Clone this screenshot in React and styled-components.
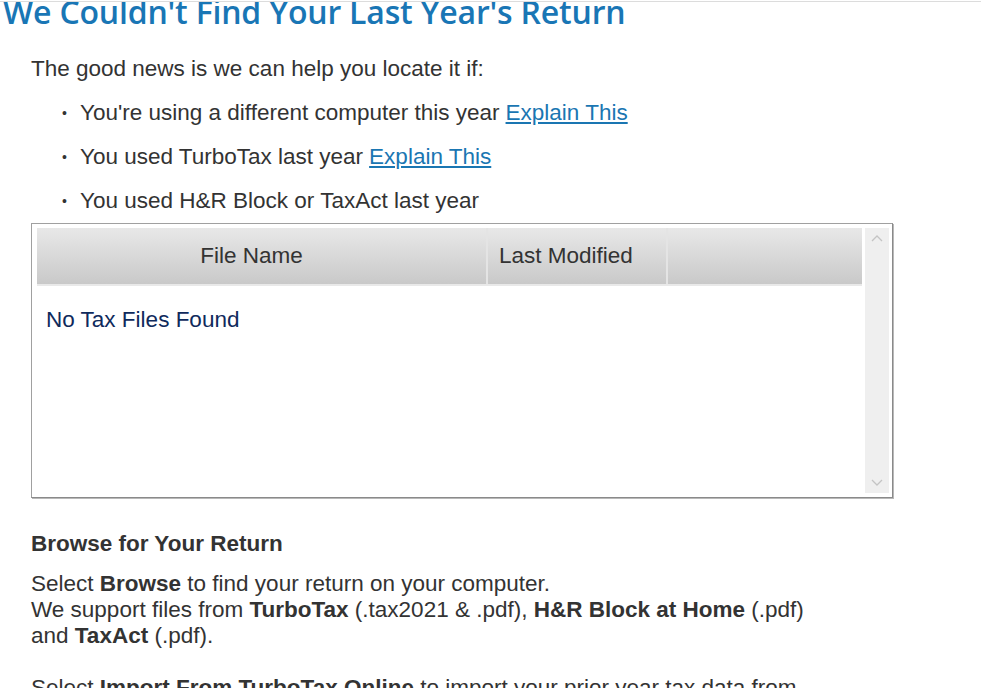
import styled, { createGlobalStyle } from "styled-components";

const GlobalStyle = createGlobalStyle`
    body {
        margin: 0;
        background: #fff;
        font-family: "Liberation Sans", Arial, sans-serif;
        color: #333;
    }
`;

const Page = styled.div`
    width: 981px;
    height: 688px;
    overflow: hidden;
    border-top: 1px solid #dcdcdc;
    margin-top: 1px;
    box-sizing: border-box;
`;

const Title = styled.h1`
    margin: -6px 0 0 3px;
    font-family: "Open Sans", "Noto Sans", sans-serif;
    font-weight: 600;
    font-size: 32px;
    line-height: 32px;
    color: #1976b5;
    letter-spacing: -0.2px;
`;

const Body = styled.div`
    padding: 0 0 0 31px;
    font-size: 22.5px;
`;

const Intro = styled.p`
    margin: 26px 0 0;
    line-height: 30px;
`;

const ReasonList = styled.ul`
    margin: 14px 0 0;
    padding: 0 0 0 31px;
    list-style: none;
    display: flex;
    flex-direction: column;
    gap: 14px;
`;

const Reason = styled.li`
    line-height: 30px;
    display: flex;
    gap: 12px;

    &::before {
        content: "•";
        font-size: 14px;
        width: 6px;
    }
`;

const Explain = styled.a`
    color: #1a76b2;
    text-decoration: underline;
    margin-left: 6px;
    cursor: pointer;
`;

const FileBox = styled.div`
    margin-top: 7px;
    width: 862px;
    height: 275px;
    box-sizing: border-box;
    border: 1px solid #a0a0a0;
    border-right-color: #8a8a8a;
    border-bottom-color: #8a8a8a;
    box-shadow: 1px 1px 0 #b8b8b8;
    padding: 4px 3px 4px 5px;
    display: flex;
    gap: 3px;
`;

const FileList = styled.div`
    flex: 1;
    display: flex;
    flex-direction: column;
`;

const HeaderRow = styled.div`
    display: grid;
    grid-template-columns: 449px 180px 1fr;
    height: 56px;
    background: linear-gradient(#e8e8e8, #c9c9c9);
    border-bottom: 2px solid #e9e9e9;
`;

const HeaderCell = styled.div`
    display: flex;
    align-items: center;
    justify-content: ${p => (p.$left ? "flex-start" : "center")};
    padding: ${p => (p.$left ? "0 0 0 11px" : "0 20px 0 0")};
    border-left: ${p => (p.$first ? "none" : "2px solid #e4e4e4")};
    font-size: 22.5px;
    color: #333;
`;

const EmptyNote = styled.div`
    padding: 20px 0 0 9px;
    color: #0f2a5c;
    font-size: 22.5px;
    line-height: 28px;
`;

const ScrollTrack = styled.div`
    width: 24px;
    background: #efefef;
    display: flex;
    flex-direction: column;
    justify-content: space-between;
    align-items: center;
    padding: 6px 0;
`;

const Chevron = styled.svg`
    width: 12px;
    height: 8px;
    stroke: #c4c4c4;
    fill: none;
    stroke-width: 1.3;
`;

const SectionTitle = styled.h2`
    margin: 33px 0 0;
    font-size: 22.5px;
    line-height: 26px;
    font-weight: bold;
`;

const Para = styled.p`
    margin: ${p => (p.$gap ? "26px" : "14px")} 0 0;
    line-height: 26px;
    font-size: 22.5px;
`;

function App() {
    return (
        <Page>
            <GlobalStyle />
            <Title>We Couldn't Find Your Last Year's Return</Title>
            <Body>
                <Intro>The good news is we can help you locate it if:</Intro>
                <ReasonList>
                    <Reason>
                        <span>You're using a different computer this year<Explain>Explain This</Explain></span>
                    </Reason>
                    <Reason>
                        <span>You used TurboTax last year<Explain>Explain This</Explain></span>
                    </Reason>
                    <Reason>
                        <span>You used H&amp;R Block or TaxAct last year</span>
                    </Reason>
                </ReasonList>
                <FileBox>
                    <FileList>
                        <HeaderRow>
                            <HeaderCell $first>File Name</HeaderCell>
                            <HeaderCell $left>Last Modified</HeaderCell>
                            <HeaderCell></HeaderCell>
                        </HeaderRow>
                        <EmptyNote>No Tax Files Found</EmptyNote>
                    </FileList>
                    <ScrollTrack>
                        <Chevron viewBox="0 0 12 8"><path d="M1 7 L6 2 L11 7" /></Chevron>
                        <Chevron viewBox="0 0 12 8"><path d="M1 1 L6 6 L11 1" /></Chevron>
                    </ScrollTrack>
                </FileBox>
                <SectionTitle>Browse for Your Return</SectionTitle>
                <Para>
                    Select <b>Browse</b> to find your return on your computer.<br />
                    We support files from <b>TurboTax</b> (.tax2021 &amp; .pdf), <b>H&amp;R Block at Home</b> (.pdf)<br />
                    and <b>TaxAct</b> (.pdf).
                </Para>
                <Para $gap>
                    Select <b>Import From TurboTax Online</b> to import your prior year tax data from
                </Para>
            </Body>
        </Page>
    );
}

export default App;
